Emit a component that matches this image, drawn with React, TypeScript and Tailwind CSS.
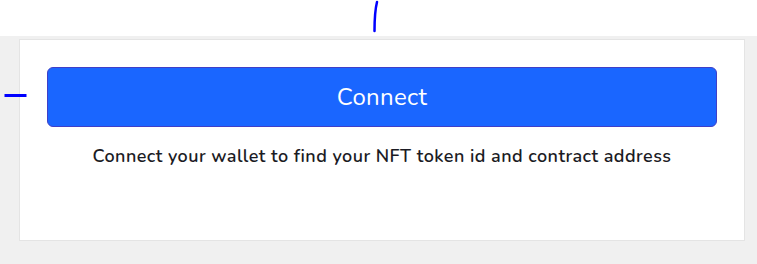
import React from "react";

const App: React.FC = () => {
  return (
    <div className="relative w-[757px] h-[264px] bg-white font-['Nunito','Lato',sans-serif] overflow-hidden">
      <div className="h-[36px] bg-white" />
      <div className="bg-[#f0f0f0] pl-[19px] pr-[12px] pt-[3px] pb-[23px]">
        <div className="h-[202px] bg-white border border-[#e4e4e4] px-[27px] pt-[27px]">
          <button className="w-full h-[60px] rounded-[6px] bg-[#1a66ff] border border-[#3f3fc8] text-white text-[24px] leading-none tracking-[0.3px]">
            Connect
          </button>
          <p className="mt-[17px] text-center text-[18px] leading-[24px] font-semibold tracking-[0.45px] text-[#1b1b24]">
            Connect your wallet to find your NFT token id and contract address
          </p>
        </div>
      </div>

      {/* pen marks over the page */}
      <svg className="absolute left-0 top-0" width="757" height="264">
        <path d="M377 2 C375.5 8 374.5 16 374.5 31" stroke="#0000ff" strokeWidth="2.5" fill="none" strokeLinecap="round" />
        <path d="M4.5 95.5 L26.5 95.5" stroke="#0000ff" strokeWidth="3" fill="none" />
      </svg>
    </div>
  );
};

export default App;
